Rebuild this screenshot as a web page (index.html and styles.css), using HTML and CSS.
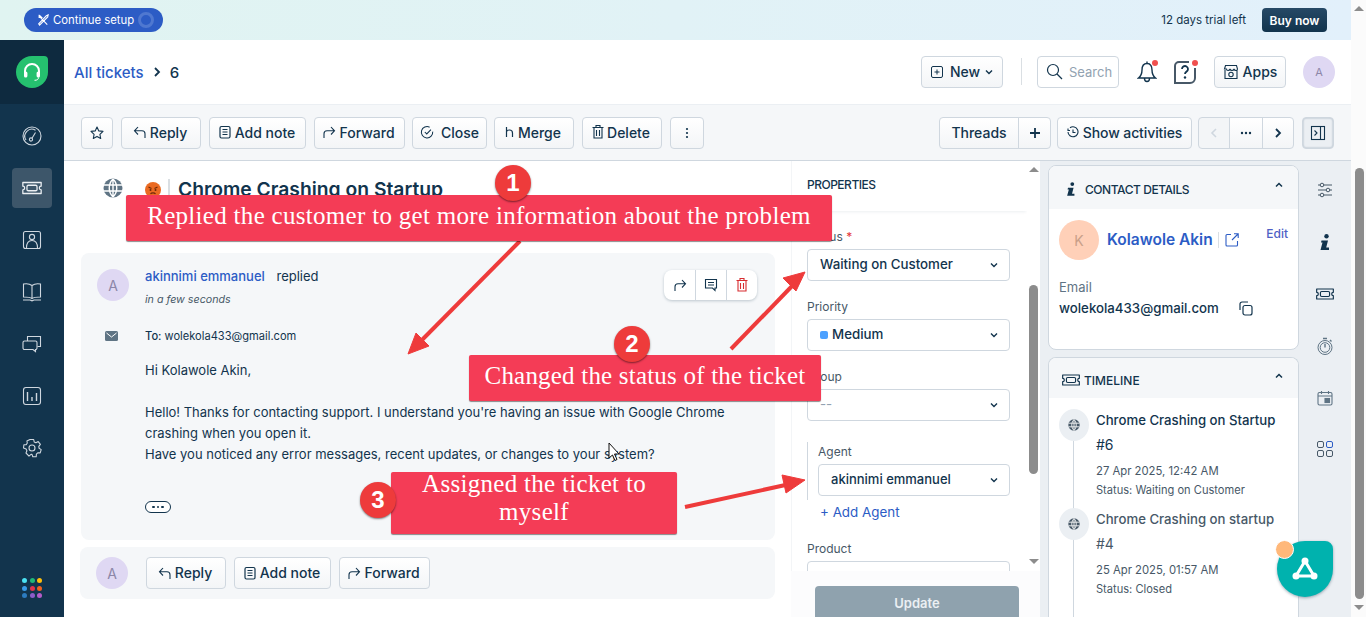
FILE: index.html
```html
<!DOCTYPE html>
<html lang="en">
<head>
  <meta charset="UTF-8">
  <title>All tickets - 6</title>
  <link rel="stylesheet" href="styles.css">
</head>
<body>
  <!-- shared icons -->
  <svg class="defs" width="0" height="0">
    <symbol id="i-reply" viewBox="0 0 16 16"><path d="M6 3 2.500 6.800 6 10.500M2.800 6.800H10c2 0 3 1.300 3 3V14" fill="none" stroke="currentColor" stroke-width="1.100"/></symbol>
    <symbol id="i-forward" viewBox="0 0 16 16"><path d="M10 3l3.500 3.800L10 10.500M13.200 6.800H6c-2 0-3 1.300-3 3V14" fill="none" stroke="currentColor" stroke-width="1.100"/></symbol>
    <symbol id="i-note" viewBox="0 0 16 16"><rect x="3" y="2.500" width="10" height="11.500" rx="1.500" fill="none" stroke="currentColor" stroke-width="1.200"/><path d="M5.500 5.500h5M5.500 8h5M5.500 10.500h5" stroke="currentColor" stroke-width="1.100"/></symbol>
    <symbol id="i-ticket" viewBox="0 0 24 24"><path d="M2 6h20v4a2 2 0 0 0 0 4v4H2v-4a2 2 0 0 0 0-4z" fill="none" stroke="currentColor" stroke-width="1.400" stroke-linejoin="round"/><rect x="6.500" y="9" width="11" height="6" rx="1.500" fill="none" stroke="currentColor" stroke-width="1.400"/></symbol>
    <symbol id="i-globe" viewBox="0 0 20 20"><circle cx="10" cy="10" r="9.500" fill="currentColor"/><path d="M1 7h18M1 13h18M10 1v18M10 1c-5 5-5 13 0 18M10 1c5 5 5 13 0 18" fill="none" stroke="#fff" stroke-width="1.400"/></symbol>
    <symbol id="i-down" viewBox="0 0 10 10"><path d="M2 3.500 5 6.500l3-3" fill="none" stroke="currentColor" stroke-width="1.400"/></symbol>
    <symbol id="i-up" viewBox="0 0 10 10"><path d="M2 6.500 5 3.500l3 3" fill="none" stroke="currentColor" stroke-width="1.500"/></symbol>
    <symbol id="i-info" viewBox="0 0 14 16"><circle cx="8.500" cy="2.200" r="2.200" fill="currentColor"/><path d="M3.500 6.500h6.500l-1.800 7H11V16H2.500l2-7.500H3z" fill="currentColor"/></symbol>
  </svg>

  <div class="page">
    <div class="page-main">
      <div class="trial-bar">
        <button class="setup-pill">
          <svg width="12" height="12" viewBox="0 0 14 14" fill="none" stroke="#fff" stroke-width="1.300"><path d="M3 3l9 9.500M2.500 1v3h3L3 1.500M11 2 2 11.500l1 1.500L12.500 3.500 13 1z"/></svg>
          <span>Continue setup</span>
          <span class="setup-ring"></span>
        </button>
        <span class="trial-left">12 days trial left</span>
        <button class="buy-now">Buy now</button>
      </div>

      <div class="app">
        <nav class="rail">
          <div class="rail-logo">
            <span class="logo-blob">
              <svg width="22" height="22" viewBox="0 0 22 22"><path d="M4 13V10a7 7 0 0 1 14 0v3" fill="none" stroke="#fff" stroke-width="2"/><rect x="3" y="10.500" width="3.400" height="6" rx="1.600" fill="#fff"/><rect x="15.600" y="10.500" width="3.400" height="6" rx="1.600" fill="#fff"/><path d="M17.500 16.500c0 2-1.500 2.800-4 2.800" fill="none" stroke="#fff" stroke-width="1"/></svg>
            </span>
          </div>
          <div class="rail-items">
            <a class="rail-item"><svg width="20" height="20" viewBox="0 0 20 20" fill="none" stroke="currentColor" stroke-width="1.100"><circle cx="10" cy="10" r="9"/><path d="M4 14a7 7 0 0 1 9.500-9.800"/><circle cx="9" cy="13.500" r="1.600"/><path d="M10 12.200 13.500 6.500"/></svg></a>
            <a class="rail-item active"><svg width="22" height="22"><use href="#i-ticket"/></svg></a>
            <a class="rail-item"><svg width="20" height="20" viewBox="0 0 20 20" fill="none" stroke="currentColor" stroke-width="1.100"><rect x="1.500" y="1.500" width="17" height="17" rx="2"/><circle cx="10" cy="7" r="2.600"/><path d="M4.500 18c0-6 2-7.500 5.500-7.500s5.500 1.500 5.500 7.500"/></svg></a>
            <a class="rail-item"><svg width="20" height="20" viewBox="0 0 20 20" fill="none" stroke="currentColor" stroke-width="1.100"><path d="M10 3.500C8 2 4 1.500 1.500 2v13c3 0 6.500 0 8.500 1.500 2-1.500 5.500-1.500 8.500-1.500V2C16 1.500 12 2 10 3.500zM10 3.500v13M1 18h7l2 .8 2-.8h7"/></svg></a>
            <a class="rail-item"><svg width="20" height="20" viewBox="0 0 20 20" fill="none" stroke="currentColor" stroke-width="1.100"><path d="M5.500 7V2.500h13V12.500H15.500"/><path d="M2.500 7h11a1.500 1.500 0 0 1 1.500 1.500V14a1.500 1.500 0 0 1-1.500 1.500v2l-2.500-2H2.500A1.500 1.500 0 0 1 1 14V8.500A1.500 1.500 0 0 1 2.500 7z"/></svg></a>
            <a class="rail-item"><svg width="20" height="20" viewBox="0 0 20 20" fill="none" stroke="currentColor" stroke-width="1.100"><rect x="1.500" y="1.500" width="17" height="17" rx="2.500"/><path d="M5.500 6v9M10 11v4M14.500 7v8" stroke-width="1.400"/></svg></a>
            <a class="rail-item"><svg width="20" height="20" viewBox="0 0 20 20" fill="none" stroke="currentColor" stroke-width="1.100"><circle cx="10" cy="10" r="3"/><path d="M8.300 1.500h3.400l.5 2.500 1.700.8 2.300-1.200 2.200 2.800-1.600 2 .3 1.900 2.100 1.300-1 3.300-2.500-.1-1.300 1.300-.2 2.600h-3.400l-.8-2.300H9l-2 1.700L4 15l.9-2.300-.8-1.700L1.500 10l.4-3.300 2.500-.1L5.300 5 4.900 3 8 1.500z" stroke-linejoin="round"/></svg></a>
          </div>
          <div class="rail-dots">
            <i style="background:#4be1f2"></i><i style="background:#1fb877"></i><i style="background:#ffbe0b"></i>
            <i style="background:#3a9be8"></i><i style="background:#e0334c"></i><i style="background:#f0611f"></i>
            <i style="background:#2c7bbf"></i><i style="background:#8d5cc9"></i><i style="background:#b45cc9"></i>
          </div>
        </nav>

        <div class="desk">
          <header class="top-head">
            <div class="crumbs">
              <a>All tickets</a>
              <svg width="14" height="14"><path d="M5 3l4 4-4 4" fill="none" stroke="#12344d" stroke-width="1.800"/></svg>
              <span>6</span>
            </div>
            <div class="head-actions">
              <button class="btn btn-new">
                <svg width="14" height="14" viewBox="0 0 14 14" fill="none" stroke="currentColor" stroke-width="1"><rect x="1.500" y="1.500" width="11" height="11" rx="1.500"/><path d="M7 4.500v5M4.500 7h5"/></svg>
                New
                <svg class="caret" width="10" height="10"><use href="#i-down"/></svg>
              </button>
              <span class="head-sep"></span>
              <div class="search-box">
                <svg width="17" height="17" viewBox="0 0 17 17" fill="none" stroke="#12344d" stroke-width="1.200"><circle cx="7" cy="7" r="5.500"/><path d="M11 11l5 5"/></svg>
                Search
              </div>
              <span class="round-icon bell">
                <svg width="20" height="24" viewBox="0 0 20 24" fill="none" stroke="#12344d" stroke-width="1.400"><path d="M10 3.500C6 3.500 5 7 5 10c0 4-1 6-3.500 8h17C16 16 15 14 15 10c0-3-1-6.500-5-6.500zM10 1.500v2M7.500 18.500c0 4 5 4 5 0"/></svg>
                <b class="ping"></b>
              </span>
              <span class="round-icon help">
                <svg width="24" height="24" viewBox="0 0 24 24" fill="none" stroke="#475867" stroke-width="2"><path d="M16 2H6a4 4 0 0 0-4 4v17h15a5 5 0 0 0 5-5V8"/><path d="M9 9a3 3 0 1 1 4.500 2.600c-1 .6-1.500 1.200-1.500 2.400" stroke="#12344d" stroke-width="1.800"/><circle cx="12" cy="17.500" r="1.200" fill="#12344d" stroke="none"/></svg>
                <b class="ping"></b>
              </span>
              <button class="btn btn-apps">
                <svg width="16" height="16" viewBox="0 0 16 16" fill="none" stroke="currentColor" stroke-width="1.100"><path d="M2 6V14.500h12V6M1.500 5l1-3.500h11l1 3.500c0 2-3 2-3.500 0-.5 2-3.500 2-4 0-.5 2-3.500 2-3.500 0z"/><circle cx="8" cy="10.500" r="2.200"/></svg>
                Apps
              </button>
              <span class="avatar head-avatar">A</span>
            </div>
          </header>

          <div class="toolbar">
            <button class="btn btn-icon star"><svg width="16" height="16" viewBox="0 0 16 16"><path d="M8 2l1.800 3.900 4.200.5-3.100 2.900.8 4.200L8 11.400l-3.700 2.100.8-4.200L2 6.400l4.200-.5z" fill="none" stroke="#12344d" stroke-width="1.100" stroke-linejoin="round"/></svg></button>
            <button class="btn b-reply"><svg width="16" height="16"><use href="#i-reply"/></svg>Reply</button>
            <button class="btn b-note"><svg width="16" height="16"><use href="#i-note"/></svg>Add note</button>
            <button class="btn b-forward"><svg width="16" height="16"><use href="#i-forward"/></svg>Forward</button>
            <button class="btn b-close"><svg width="14" height="14" viewBox="0 0 16 16" fill="none" stroke="currentColor" stroke-width="1.200"><path d="M14.500 7.500A6.500 6.500 0 1 1 11 2.500"/><path d="M5.500 8l2.200 2.200 4.800-5"/></svg>Close</button>
            <button class="btn b-merge"><svg width="12" height="14" viewBox="0 0 12 14" fill="none" stroke="currentColor" stroke-width="1.200"><path d="M2.500 12V2M2.500 7c0-1.500 1-2 3-2s3 1 3 3v4"/></svg>Merge</button>
            <button class="btn b-delete"><svg width="14" height="16" viewBox="0 0 14 16" fill="none" stroke="currentColor" stroke-width="1.100"><path d="M1.500 3.500h11M5 3.500V1.500h4v2M3 3.500V14h8V3.500M5.500 6v6M8.500 6v6"/></svg>Delete</button>
            <button class="btn btn-icon b-more"><svg width="4" height="14" viewBox="0 0 4 14"><circle cx="2" cy="3" r="1.100" fill="#12344d"/><circle cx="2" cy="7" r="1.100" fill="#12344d"/><circle cx="2" cy="11" r="1.100" fill="#12344d"/></svg></button>
            <div class="toolbar-right">
              <div class="btn-group">
                <button class="btn b-threads">Threads</button>
                <button class="btn b-plus"><svg width="12" height="12" viewBox="0 0 12 12"><path d="M6 1v10M1 6h10" stroke="#12344d" stroke-width="1.800"/></svg></button>
              </div>
              <button class="btn b-activity"><svg width="12" height="12" viewBox="0 0 12 12" fill="none" stroke="currentColor" stroke-width="1.100"><path d="M3 1.800A5 5 0 1 1 1 6M1 2.500v2h2M6 3.500V6.500h2.500"/></svg>Show activities</button>
              <div class="btn-group pager">
                <button class="btn page-prev"><svg width="12" height="12" viewBox="0 0 12 12"><path d="M8 2 4 6l4 4" fill="none" stroke="#cfd7df" stroke-width="1.600"/></svg></button>
                <button class="btn page-dots"><svg width="12" height="4" viewBox="0 0 12 4"><circle cx="2" cy="2" r="1.200" fill="#12344d"/><circle cx="6" cy="2" r="1.200" fill="#12344d"/><circle cx="10" cy="2" r="1.200" fill="#12344d"/></svg></button>
                <button class="btn page-next"><svg width="12" height="12" viewBox="0 0 12 12"><path d="M4 2l4 4-4 4" fill="none" stroke="#12344d" stroke-width="1.800"/></svg></button>
              </div>
              <button class="btn btn-icon b-panel"><svg width="16" height="16" viewBox="0 0 16 16" fill="none" stroke="#12344d" stroke-width="1.100"><rect x="1.500" y="1.500" width="13" height="13"/><path d="M10.500 1.500v13M4.500 5.500 7 8l-2.500 2.500"/></svg></button>
            </div>
          </div>

          <div class="content">
            <section class="ticket">
              <div class="ticket-title">
                <svg class="title-globe" width="20" height="20" color="#5f7484"><use href="#i-globe"/></svg>
                <svg class="mood" width="16" height="16" viewBox="0 0 16 16"><circle cx="8" cy="8" r="8" fill="#ea6a22"/><path d="M3.500 5l3 1.500M12.500 5l-3 1.500M5.500 12c1-1.500 4-1.500 5 0" fill="none" stroke="#6d2a08" stroke-width="1.200"/><circle cx="5.500" cy="8" r="1" fill="#6d2a08"/><circle cx="10.500" cy="8" r="1" fill="#6d2a08"/></svg>
                <h1>Chrome Crashing on Startup</h1>
              </div>

              <article class="reply-card">
                <div class="reply-head">
                  <span class="avatar">A</span>
                  <div>
                    <div class="reply-who"><a>akinnimi emmanuel</a> replied</div>
                    <div class="reply-when">in a few seconds</div>
                  </div>
                  <div class="reply-actions">
                    <span><svg width="16" height="16"><use href="#i-forward"/></svg></span>
                    <span><svg width="14" height="14" viewBox="0 0 14 14" fill="none" stroke="#12344d" stroke-width="1.100"><path d="M1.500 1.500h11v8.500H11v2.500L8.500 10h-7zM4 4.500h6M4 7h6"/></svg></span>
                    <span class="danger"><svg width="14" height="16" viewBox="0 0 14 16" fill="none" stroke="#d72d30" stroke-width="1.100"><path d="M1.500 3.500h11M5 3.500V1.500h4v2M3 3.500V14h8V3.500M5.500 6v6M8.500 6v6"/></svg></span>
                  </div>
                </div>
                <div class="reply-to">
                  <svg width="13" height="10" viewBox="0 0 13 10"><rect width="13" height="10" rx="1.500" fill="#5f7484"/><path d="M1.500 2 6.500 6l5-4" fill="none" stroke="#fff" stroke-width="1"/></svg>
                  <span><b>To:</b> wolekola433@gmail.com</span>
                </div>
                <div class="reply-body">
                  <p>Hi Kolawole Akin,</p>
                  <p>&nbsp;</p>
                  <p>Hello! Thanks for contacting support. I understand you're having an issue with Google Chrome crashing when you open it.</p>
                  <p>Have you noticed any error messages, recent updates, or changes to your system?</p>
                </div>
                <span class="quote-pill"><i></i><i></i><i></i></span>
              </article>

              <div class="reply-bar">
                <span class="avatar">A</span>
                <button class="btn b-reply"><svg width="16" height="16"><use href="#i-reply"/></svg>Reply</button>
                <button class="btn b-note"><svg width="16" height="16"><use href="#i-note"/></svg>Add note</button>
                <button class="btn b-forward"><svg width="16" height="16"><use href="#i-forward"/></svg>Forward</button>
              </div>
            </section>

            <aside class="props">
              <div class="props-scrollarea">
                <div class="props-list">
                  <h2>PROPERTIES</h2>
                  <div class="field first">
                    <label>Status <em>*</em></label>
                    <div class="select">Waiting on Customer<svg width="10" height="10"><use href="#i-down"/></svg></div>
                  </div>
                  <div class="field">
                    <label>Priority</label>
                    <div class="select"><span><i class="prio-dot"></i>Medium</span><svg width="10" height="10"><use href="#i-down"/></svg></div>
                  </div>
                  <div class="field">
                    <label>Group</label>
                    <div class="select muted">--<svg width="10" height="10"><use href="#i-down"/></svg></div>
                  </div>
                  <div class="agent-block">
                    <label>Agent</label>
                    <div class="select">akinnimi emmanuel<svg width="10" height="10"><use href="#i-down"/></svg></div>
                  </div>
                  <a class="add-agent">+ Add Agent</a>
                  <div class="field product">
                    <label>Product</label>
                    <div class="select"></div>
                  </div>
                </div>
                <div class="inner-scroll">
                  <i class="arrow-up"></i>
                  <i class="inner-thumb"></i>
                  <i class="arrow-down"></i>
                </div>
              </div>
              <div class="props-foot"><button class="update-btn">Update</button></div>
            </aside>

            <aside class="side">
              <div class="side-cards">
                <section class="side-card contact">
                  <div class="side-head">
                    <svg class="info" width="12" height="14" color="#12344d"><use href="#i-info"/></svg>
                    <span class="tight">CONTACT DETAILS</span>
                    <svg class="up" width="10" height="10"><use href="#i-up"/></svg>
                  </div>
                  <div class="contact-body">
                    <div class="contact-row">
                      <span class="avatar peach">K</span>
                      <a class="contact-name">Kolawole Akin</a>
                      <svg class="ext" width="14" height="14" viewBox="0 0 14 14" fill="none" stroke="#2c5cc5" stroke-width="1.100"><path d="M6 1.500H2A1 1 0 0 0 1 2.500v9.500a1 1 0 0 0 1 1h9.500a1 1 0 0 0 1-1V8M7 7l6-6M9 .8h4.200V5"/></svg>
                      <a class="edit-link">Edit</a>
                    </div>
                    <div class="email-label">Email</div>
                    <div class="email-value">wolekola433@gmail.com
                      <svg width="14" height="15" viewBox="0 0 14 15" fill="none" stroke="#12344d" stroke-width="1.200"><rect x="4" y="4.500" width="9" height="9.500" rx="2"/><path d="M1 9V3a2 2 0 0 1 2-2h6"/></svg>
                    </div>
                  </div>
                </section>

                <section class="side-card timeline">
                  <div class="side-head">
                    <svg class="t-icon" width="20" height="20" color="#12344d"><use href="#i-ticket"/></svg>
                    TIMELINE
                    <svg class="up" width="10" height="10"><use href="#i-up"/></svg>
                  </div>
                  <div class="tl-list">
                    <div class="tl-item">
                      <span class="tl-dot"><svg width="12" height="12" color="#475867"><use href="#i-globe"/></svg></span>
                      <div>
                        <div class="tl-title">Chrome Crashing on Startup</div>
                        <div class="tl-num">#6</div>
                        <div class="tl-date">27 Apr 2025, 12:42 AM</div>
                        <div class="tl-status">Status: Waiting on Customer</div>
                      </div>
                    </div>
                    <div class="tl-item past">
                      <span class="tl-dot"><svg width="12" height="12" color="#475867"><use href="#i-globe"/></svg></span>
                      <div>
                        <div class="tl-title">Chrome Crashing on startup</div>
                        <div class="tl-num">#4</div>
                        <div class="tl-date">25 Apr 2025, 01:57 AM</div>
                        <div class="tl-status">Status: Closed</div>
                      </div>
                    </div>
                  </div>
                </section>
              </div>

              <div class="side-icons">
                <svg width="16" height="16" viewBox="0 0 16 16" fill="none" stroke="#475867" stroke-width="1"><path d="M1 3h14M1 8h14M1 13h14"/><circle cx="5" cy="3" r="1.800" fill="#ebeff3"/><circle cx="11" cy="8" r="1.800" fill="#ebeff3"/><circle cx="5" cy="13" r="1.800" fill="#ebeff3"/></svg>
                <svg class="info-big" width="14" height="16" color="#12344d"><use href="#i-info"/></svg>
                <svg width="20" height="20" color="#12344d"><use href="#i-ticket"/></svg>
                <svg width="16" height="18" viewBox="0 0 16 18" fill="none" stroke="#5f7484" stroke-width="1"><circle cx="8" cy="10.500" r="7"/><circle cx="8" cy="10.500" r="4.800"/><path d="M8 10.500V7M6 1.500h4M13 3l1.500 1.500" stroke-width="1.400"/></svg>
                <svg width="16" height="16" viewBox="0 0 16 16" fill="none" stroke="#5f7484" stroke-width="1.100"><rect x="1" y="2.500" width="14" height="12.500" rx="1.500"/><path d="M1 6h14M4.500 1v3M11.500 1v3"/><rect x="8" y="8.500" width="4.500" height="4" fill="#5f7484"/></svg>
                <div class="apps-grid"><i></i><i class="blue"></i><i></i><i></i></div>
              </div>
            </aside>
          </div>
        </div>
      </div>
    </div>

    <div class="page-scroll">
      <i class="arrow-up"></i>
      <i class="page-thumb"></i>
      <i class="arrow-down"></i>
    </div>
  </div>

  <!-- tutorial annotations drawn over the page -->
  <svg class="arrows" width="1366" height="617" viewBox="0 0 1366 617">
    <g fill="#ee3b3b" stroke="#ee3b3b" stroke-linejoin="round">
      <path d="M520 241 418 344" stroke-width="4" fill="none"/>
      <path d="M408 354l8-21 13 13z" stroke-width="1"/>
      <path d="M731 349 794 284" stroke-width="4" fill="none"/>
      <path d="M805 272l-22 6 13 13z" stroke-width="1"/>
      <path d="M685 507 790 484" stroke-width="4" fill="none"/>
      <path d="M805 480l-23-5 4 18z" stroke-width="1"/>
    </g>
    <path d="M609 443v15l3.500-3 2.500 5.500 2-1-2.500-5.500h4.500z" fill="#fff" stroke="#111" stroke-width="1"/>
  </svg>
  <div class="note note-one">Replied the customer to get more information about the problem</div>
  <div class="note note-two">Changed the status of the ticket</div>
  <div class="note note-three">Assigned the ticket to myself</div>
  <span class="step step-one">1</span>
  <span class="step step-two">2</span>
  <span class="step step-three">3</span>

  <div class="fab">
    <span class="fab-dot"></span>
    <svg width="32" height="32" viewBox="0 0 32 32" fill="none" stroke="#fff" stroke-width="3"><path d="M16 8 7 23h18z"/><circle cx="16" cy="8" r="3.500" fill="#fff" stroke="none"/><circle cx="7" cy="23" r="3.500" fill="#fff" stroke="none"/><circle cx="25" cy="23" r="3.500" fill="#fff" stroke="none"/></svg>
  </div>
</body>
</html>
```

FILE: styles.css
```css
* {
  box-sizing: border-box;
}
html, body {
  margin: 0;
  height: 617px;
  overflow: hidden;
}
body {
  font-family: Inter, "Noto Sans", Arial, sans-serif;
  font-size: 14px;
  color: #12344d;
  background: #fff;
  position: relative;
}
.defs {
  position: absolute;
}
button {
  font-family: inherit;
}
svg {
  flex: none;
}
.page {
  display: flex;
  height: 617px;
}
.page-main {
  width: 1351px;
  display: flex;
  flex-direction: column;
}

/* fake browser scrollbars */
.page-scroll {
  width: 15px;
  background: #fbfbfb;
  display: flex;
  flex-direction: column;
  align-items: center;
  padding-top: 6px;
}
.page-thumb {
  width: 9px;
  height: 431px;
  margin-top: 157px;
  margin-bottom: 6px;
  margin-left: 1px;
  border-radius: 5px;
  background: #8c8c8c;
}
.arrow-up, .arrow-down {
  width: 0;
  height: 0;
  border-left: 5px solid transparent;
  border-right: 5px solid transparent;
}
.arrow-up {
  border-bottom: 5px solid #8c8c8c;
}
.arrow-down {
  border-top: 5px solid #8c8c8c;
}

/* trial banner */
.trial-bar {
  height: 40px;
  flex: none;
  display: flex;
  align-items: center;
  padding: 0 24px;
  background: linear-gradient(90deg, #e0f4f1, #e2f0fb);
}
.setup-pill {
  height: 24px;
  width: 139px;
  display: flex;
  align-items: center;
  gap: 4px;
  padding: 0 9px 0 13px;
  border: 0;
  border-radius: 12px;
  background: #2c5cc5;
  color: #fff;
  font-size: 11.300px;
  white-space: nowrap;
}
.setup-ring {
  width: 16px;
  height: 16px;
  margin-left: auto;
  border-radius: 50%;
  border: 3px solid #4f78d0;
}
.trial-left {
  margin-left: auto;
  font-size: 11.500px;
  color: #12344d;
}
.buy-now {
  height: 24px;
  width: 65px;
  margin-left: 16px;
  border: 0;
  border-radius: 4px;
  background: linear-gradient(#264966, #12344d);
  color: #fff;
  font-size: 12px;
  font-weight: 600;
}

.app {
  flex: 1;
  display: flex;
  min-height: 0;
}

/* left rail */
.rail {
  width: 64px;
  flex: none;
  display: flex;
  flex-direction: column;
  background: #12344d;
}
.rail-logo {
  height: 64px;
  display: flex;
  align-items: center;
  justify-content: center;
  background: #0e2a3f;
}
.logo-blob {
  width: 32px;
  height: 32px;
  display: flex;
  align-items: center;
  justify-content: center;
  background: #25c16f;
  border-radius: 50% 4px 50% 50%;
}
.rail-items {
  display: flex;
  flex-direction: column;
  align-items: center;
  gap: 12px;
  padding-top: 12px;
}
.rail-item {
  width: 40px;
  height: 40px;
  display: flex;
  align-items: center;
  justify-content: center;
  border-radius: 4px;
  color: #cfd7df;
}
.rail-item.active {
  background: #3d566a;
  color: #ebeff3;
}
.rail-dots {
  margin-top: auto;
  margin-bottom: 19px;
  align-self: center;
  display: grid;
  grid-template-columns: repeat(3, 5px);
  gap: 2.500px;
}
.rail-dots i {
  width: 5px;
  height: 5px;
  border-radius: 50%;
}

.desk {
  flex: 1;
  display: flex;
  flex-direction: column;
  min-width: 0;
}

/* header */
.top-head {
  height: 65px;
  flex: none;
  display: flex;
  align-items: center;
  padding: 0 16px 1px 10px;
  border-bottom: 1px solid #ebeff3;
}
.crumbs {
  display: flex;
  align-items: center;
  gap: 6px;
  padding-top: 1px;
  font-size: 15px;
  font-weight: 500;
}
.crumbs a {
  color: #2c5cc5;
}
.head-actions {
  margin-left: auto;
  display: flex;
  align-items: center;
}
.btn {
  height: 32px;
  display: inline-flex;
  align-items: center;
  justify-content: center;
  gap: 2px;
  padding: 0 3px 1px 0;
  border: 1px solid #cfd7df;
  border-radius: 4px;
  background: linear-gradient(#fff, #f3f5f7);
  color: #12344d;
  font-size: 14px;
  font-weight: 500;
  white-space: nowrap;
}
.btn-new {
  width: 82px;
  padding: 0;
  gap: 6px;
}
.caret {
  margin-left: -2px;
}
.head-sep {
  width: 1px;
  height: 27px;
  margin: 0 15px 0 18px;
  background: #dadfe3;
}
.search-box {
  width: 82px;
  height: 32px;
  display: flex;
  align-items: center;
  gap: 6px;
  padding-left: 8px;
  border: 1px solid #cfd7df;
  border-radius: 4px;
  color: #92a2b1;
  font-size: 13px;
}
.round-icon {
  position: relative;
  display: flex;
}
.bell {
  margin-left: 18px;
}
.help {
  margin-left: 16px;
}
.ping {
  position: absolute;
  top: 0;
  right: -1px;
  width: 6px;
  height: 6px;
  border-radius: 50%;
  background: #f0504f;
}
.btn-apps {
  width: 72px;
  margin-left: 17px;
  padding: 0;
  gap: 4px;
}
.avatar {
  width: 32px;
  height: 32px;
  flex: none;
  display: flex;
  align-items: center;
  justify-content: center;
  border-radius: 50%;
  background: #dfd8f3;
  color: #8c86a8;
  font-size: 14px;
}
.head-avatar {
  margin-left: 17px;
  font-size: 11px;
}

/* toolbar */
.toolbar {
  height: 56px;
  flex: none;
  display: flex;
  align-items: center;
  padding: 0 17px;
  gap: 8px;
  background: #f5f7f9;
  border-bottom: 1px solid #cfd7df;
}
.btn-icon {
  width: 32px;
  padding: 0;
}
.b-reply {
  width: 80px;
}
.b-note {
  width: 97px;
}
.b-forward {
  width: 91px;
}
.b-close {
  width: 75px;
  margin-left: -1px;
  gap: 7px;
  padding-right: 0;
}
.b-merge {
  width: 80px;
  margin-left: -1px;
}
.b-delete {
  width: 80px;
}
.b-more {
  width: 34px;
}
.toolbar-right {
  margin-left: auto;
  display: flex;
  align-items: center;
  gap: 6px;
}
.btn-group {
  display: flex;
}
.btn-group .btn {
  border-radius: 0;
  margin-left: -1px;
  padding: 0;
}
.btn-group .btn:first-child {
  margin-left: 0;
  border-radius: 4px 0 0 4px;
}
.btn-group .btn:last-child {
  border-radius: 0 4px 4px 0;
}
.b-threads {
  width: 80px;
}
.b-plus {
  width: 33px;
}
.b-activity {
  width: 135px;
  padding: 0 0 1px;
  gap: 4px;
  letter-spacing: -0.1px;
}
.page-prev {
  width: 32px;
  background: #f3f5f7;
}
.page-dots {
  width: 34px;
}
.page-next {
  width: 32px;
}
.b-panel {
  margin-left: 2px;
  background: #ebeff3;
  box-shadow: inset 0 0 2px #92a2b1;
}

/* ticket column */
.content {
  flex: 1;
  display: flex;
  min-height: 0;
}
.ticket {
  width: 727px;
  flex: none;
  padding: 0 16px 0 17px;
}
.ticket-title {
  height: 92px;
  display: flex;
  align-items: flex-start;
  padding-top: 17px;
  padding-left: 22px;
}
.mood {
  margin: 4px 0 0 22px;
}
.ticket-title h1 {
  margin: 1px 0 0 7px;
  padding-left: 8px;
  border-left: 2px solid #dadfe3;
  font-size: 19.300px;
  line-height: 20px;
  font-weight: 600;
}
.reply-card {
  height: 287px;
  padding: 16px;
  border-radius: 8px;
  background: #f5f7f9;
}
.reply-head {
  position: relative;
  display: flex;
  gap: 16px;
}
.reply-who {
  font-size: 13px;
  line-height: 14px;
}
.reply-who a {
  color: #2c5cc5;
  font-weight: 500;
  margin-right: 8px;
}
.reply-when {
  margin-top: 9px;
  font-size: 10.700px;
  line-height: 16px;
  font-style: italic;
  color: #475867;
}
.reply-actions {
  position: absolute;
  top: 1px;
  right: 2px;
  height: 30px;
  display: flex;
  border-radius: 8px;
  background: #fff;
  box-shadow: 0 1px 3px rgba(18, 52, 77, 0.25);
}
.reply-actions span {
  width: 31px;
  display: flex;
  align-items: center;
  justify-content: center;
  border-left: 1px solid #cfd7df;
}
.reply-actions span:first-child {
  border-left: 0;
}
.reply-to {
  display: flex;
  align-items: center;
  gap: 27px;
  margin-top: 20px;
  padding-left: 8px;
  font-size: 11.100px;
  line-height: 16px;
}
.reply-to b {
  font-weight: 500;
}
.reply-body {
  margin: 16px 0 0 48px;
  font-size: 13px;
  line-height: 21px;
}
.reply-body p {
  margin: 0;
}
.quote-pill {
  width: 26px;
  height: 12px;
  margin: 36px 0 0 48px;
  display: flex;
  align-items: center;
  justify-content: center;
  gap: 2px;
  border: 1px solid #12344d;
  border-radius: 6px;
  background: #fff;
}
.quote-pill i {
  width: 2.500px;
  height: 2.500px;
  border-radius: 50%;
  background: #12344d;
}
.reply-bar {
  height: 52px;
  margin: 7px 0 0 -1px;
  display: flex;
  align-items: center;
  gap: 8px;
  padding: 0 16px;
  border-radius: 8px;
  background: #f5f7f9;
}
.reply-bar .avatar {
  margin-right: 10px;
}

/* properties */
.props {
  width: 249px;
  flex: none;
  display: flex;
  flex-direction: column;
  background: #fff;
}
.props-scrollarea {
  height: 410px;
  flex: none;
  display: flex;
  overflow: hidden;
  border-left: 1px solid #f3f5f7;
}
.props-list {
  width: 235px;
  flex: none;
  padding-left: 15px;
}
.props-list h2 {
  height: 50px;
  margin: 0 0 0 -15px;
  padding: 16px 0 0 15px;
  font-size: 12px;
  letter-spacing: -0.5px;
  line-height: 16px;
  font-weight: 500;
  box-shadow: 0 2px 3px -1px rgba(18, 52, 77, 0.08);
}
.field label, .agent-block label {
  display: block;
  font-size: 12px;
  line-height: 16px;
  color: #475867;
  margin-bottom: 4px;
}
.field label em {
  color: #e43538;
  font-style: normal;
}
.field {
  width: 203px;
  margin-top: 18px;
}
.select {
  height: 32px;
  display: flex;
  align-items: center;
  justify-content: space-between;
  padding: 0 10px 2px 12px;
  border: 1px solid #cfd7df;
  border-radius: 4px;
  background: #fff;
  font-size: 13.300px;
  font-weight: 500;
}
.select svg {
  color: #12344d;
  margin-top: 2px;
}
.select.muted {
  color: #92a2b1;
  font-weight: 400;
}
.prio-dot {
  display: inline-block;
  width: 8px;
  height: 8px;
  margin-right: 4px;
  border-radius: 2px;
  background: #4da1ff;
}
.agent-block {
  width: 203px;
  height: 58px;
  margin-top: 21px;
  padding-left: 10px;
  border-left: 1px solid #cfd7df;
}
.agent-block label {
  padding-top: 2px;
}
.agent-block .select {
  font-size: 13px;
}
.add-agent {
  display: block;
  margin: 4px 0 0 13px;
  font-size: 13.400px;
  line-height: 16px;
  color: #2c5cc5;
}
.product {
  margin-top: 21px;
}
.inner-scroll {
  width: 14px;
  display: flex;
  flex-direction: column;
  align-items: center;
  padding-top: 6px;
  background: #fff;
}
.inner-thumb {
  width: 9px;
  height: 189px;
  margin-top: 113px;
  margin-bottom: 85px;
  border-radius: 5px;
  background: #8c8c8c;
}
.props-foot {
  flex: 1;
  padding: 15px 0 0 24px;
  background: #fcfcfd;
}
.update-btn {
  display: block;
  width: 204px;
  height: 31px;
  padding: 3px 0 0;
  border: 0;
  border-radius: 4px 4px 0 0;
  background: #8fa2ae;
  color: #ebeff3;
  font-size: 13px;
  font-weight: 600;
}

/* right side */
.side {
  flex: 1;
  display: flex;
  background: #ebeff3;
  padding: 4px 0 0 8px;
  min-width: 0;
}
.side-cards {
  width: 251px;
  flex: none;
}
.side-card {
  background: #fff;
  border: 1px solid #cfd7df;
  border-radius: 8px;
  overflow: hidden;
}
.contact {
  height: 185px;
}
.side-head {
  display: flex;
  align-items: center;
  gap: 8px;
  height: 43px;
  padding: 3px 14px 0 16px;
  background: #f5f7f9;
  font-size: 12px;
  font-weight: 500;
}
.tight {
  letter-spacing: -0.45px;
}
.side-head .up {
  margin-left: auto;
  margin-bottom: 8px;
}
.contact-body {
  padding: 11px 10px;
}
.contact-row {
  display: flex;
  align-items: center;
}
.avatar.peach {
  width: 40px;
  height: 40px;
  background: #ffd0b8;
  color: #c99f88;
}
.contact-name {
  margin-left: 8px;
  padding-right: 5px;
  border-right: 1px solid #dadfe3;
  color: #2c5cc5;
  font-size: 15.500px;
  line-height: 16px;
  font-weight: 600;
}
.ext {
  margin-left: 6px;
}
.edit-link {
  margin: -14px 0 0 auto;
  font-size: 12px;
  font-weight: 500;
  color: #4f5fc5;
}
.email-label {
  margin-top: 19px;
  font-size: 13px;
  line-height: 16px;
  color: #5f7484;
}
.email-value {
  margin-top: 5px;
  display: flex;
  align-items: center;
  gap: 20px;
  font-size: 13.250px;
  line-height: 16px;
  font-weight: 500;
}
.timeline {
  margin-top: 7px;
  height: 260px;
  border-radius: 8px 8px 0 0;
  border-bottom: 0;
}
.timeline .side-head {
  height: 40px;
  padding: 4px 14px 0 12px;
  gap: 3px;
}
.tl-list {
  padding: 12px 10px 0;
}
.tl-item {
  position: relative;
  height: 99px;
  display: flex;
  gap: 7px;
}
.tl-item::before {
  content: "";
  position: absolute;
  left: 14px;
  top: 30px;
  bottom: -100px;
  width: 1px;
  background: #cfd7df;
}
.tl-dot {
  position: relative;
  width: 30px;
  height: 32px;
  margin-top: -1px;
  flex: none;
  display: flex;
  align-items: center;
  justify-content: center;
  border-radius: 50%;
  background: #ebeff3;
}
.tl-title {
  font-size: 13.200px;
  line-height: 20px;
  font-weight: 500;
}
.tl-num {
  margin-top: 5px;
  font-size: 14px;
  line-height: 20px;
}
.tl-date {
  margin-top: 6px;
  font-size: 11.300px;
  line-height: 20px;
  color: #475867;
}
.tl-status {
  font-size: 11.100px;
  line-height: 18px;
  color: #475867;
}
.past .tl-title, .past .tl-num {
  color: #475867;
}
.side-icons {
  flex: 1;
  display: flex;
  flex-direction: column;
  align-items: center;
  padding-top: 15px;
}
.side-icons > svg {
  height: 20px;
  margin-bottom: 32px;
}
.apps-grid {
  display: grid;
  grid-template-columns: repeat(2, 7px);
  gap: 2px;
  margin-top: 1px;
}
.apps-grid i {
  height: 7px;
  border: 1px solid #475867;
  border-radius: 2px;
}
.apps-grid .blue {
  border-color: #2c5cc5;
}

/* annotations */
.arrows {
  position: absolute;
  top: 0;
  left: 0;
  pointer-events: none;
}
.note {
  position: absolute;
  display: flex;
  align-items: center;
  justify-content: center;
  text-align: center;
  background: #f43c56;
  color: #fff;
  font-family: "Liberation Serif", serif;
  font-size: 25px;
  line-height: 28px;
  letter-spacing: 0.3px;
  padding-bottom: 4px;
  box-shadow: 0 1px 1px rgba(0, 0, 0, 0.45);
  border-radius: 2px;
}
.note-one {
  left: 126px;
  top: 195px;
  width: 706px;
  height: 46px;
}
.note-two {
  left: 469px;
  top: 355px;
  width: 352px;
  height: 46px;
  letter-spacing: 0.2px;
}
.note-three {
  left: 391px;
  top: 472px;
  width: 286px;
  height: 62px;
  padding: 0 20px 10px;
}
.step {
  position: absolute;
  width: 36px;
  height: 36px;
  display: flex;
  align-items: center;
  justify-content: center;
  border-radius: 50%;
  background: #ee3b3b;
  color: #fff;
  font-family: "Liberation Sans", Arial, sans-serif;
  font-size: 24px;
  font-weight: 700;
  box-shadow: 0 1px 2px rgba(0, 0, 0, 0.5);
}
.step-one {
  left: 495px;
  top: 165px;
}
.step-two {
  left: 614px;
  top: 326px;
}
.step-three {
  left: 360px;
  top: 482px;
}

.fab {
  position: absolute;
  left: 1277px;
  top: 541px;
  width: 56px;
  height: 56px;
  display: flex;
  align-items: center;
  justify-content: center;
  border-radius: 50% 8px 50% 50%;
  background: #00b2ae;
  box-shadow: 0 1px 3px rgba(18, 52, 77, 0.4);
}
.fab-dot {
  position: absolute;
  left: -2px;
  top: -1px;
  width: 19px;
  height: 19px;
  border-radius: 50%;
  background: #ffb87a;
  border: 1px solid #fff;
}
```
